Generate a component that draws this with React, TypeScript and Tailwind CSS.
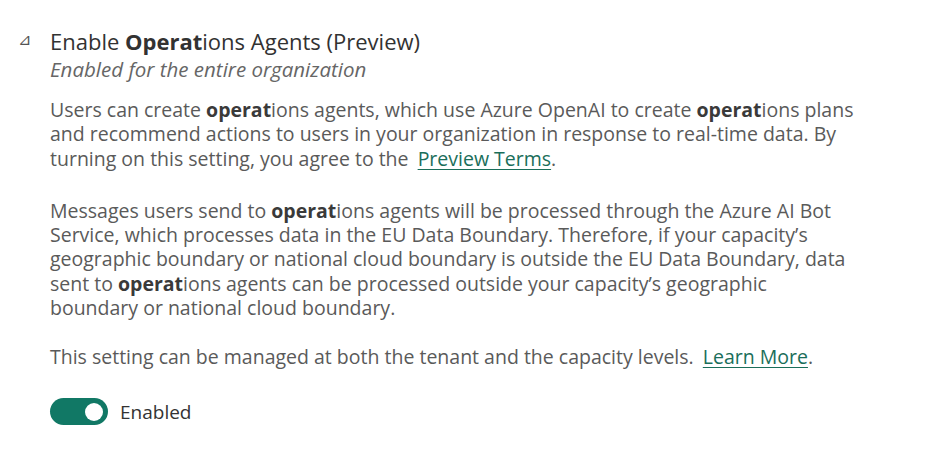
import React from "react";

const B = ({ children }: { children: React.ReactNode }) => (
  <span className="font-bold text-[#3a3a3a]">{children}</span>
);

export default function App() {
  return (
    <div className="w-[940px] h-[466px] bg-white font-['Open_Sans',sans-serif] text-[#5a5a5a] overflow-hidden">
      <div className="flex pt-[26px]">
        {/* collapse arrow */}
        <div className="w-[50px] flex justify-end pr-[19px] pt-[5px] text-[16px] text-[#555] leading-none">
          <span>⊿</span>
        </div>

        <div className="flex-1">
          <div className="text-[22px] leading-[30px] text-[#323232]">
            Enable <span className="font-bold">Operat</span>ions Agents (Preview)
          </div>
          <div className="text-[20.5px] leading-[26px] italic text-[#666]">
            Enabled for the entire organization
          </div>

          <div className="w-[880px] mt-[16px] text-[19.5px] leading-[24.3px]">
            <p>
              Users can create <B>operat</B>ions agents, which use Azure OpenAI to create <B>operat</B>ions plans
              <br />
              and recommend actions to users in your organization in response to real-time data. By
              <br />
              turning on this setting, you agree to the{" "}
              <a className="ml-[4px] text-[#1a6e5a] underline underline-offset-[3px]">Preview Terms</a>.
            </p>
            <p className="mt-[28px]">
              Messages users send to <B>operat</B>ions agents will be processed through the Azure AI Bot
              <br />
              Service, which processes data in the EU Data Boundary. Therefore, if your capacity’s
              <br />
              geographic boundary or national cloud boundary is outside the EU Data Boundary, data
              <br />
              sent to <B>operat</B>ions agents can be processed outside your capacity’s geographic
              <br />
              boundary or national cloud boundary.
            </p>
            <p className="mt-[25px]">
              This setting can be managed at both the tenant and the capacity levels.{" "}
              <a className="ml-[4px] text-[#1a6e5a] underline underline-offset-[3px]">Learn More</a>.
            </p>
          </div>

          <div className="mt-[28px] flex items-center gap-[12px]">
            <div className="w-[58px] h-[27px] rounded-full bg-[#117865] flex items-center justify-end pr-[5px]">
              <div className="w-[18px] h-[18px] rounded-full bg-white" />
            </div>
            <span className="text-[19px] text-[#333]">Enabled</span>
          </div>
        </div>
      </div>
    </div>
  );
}
